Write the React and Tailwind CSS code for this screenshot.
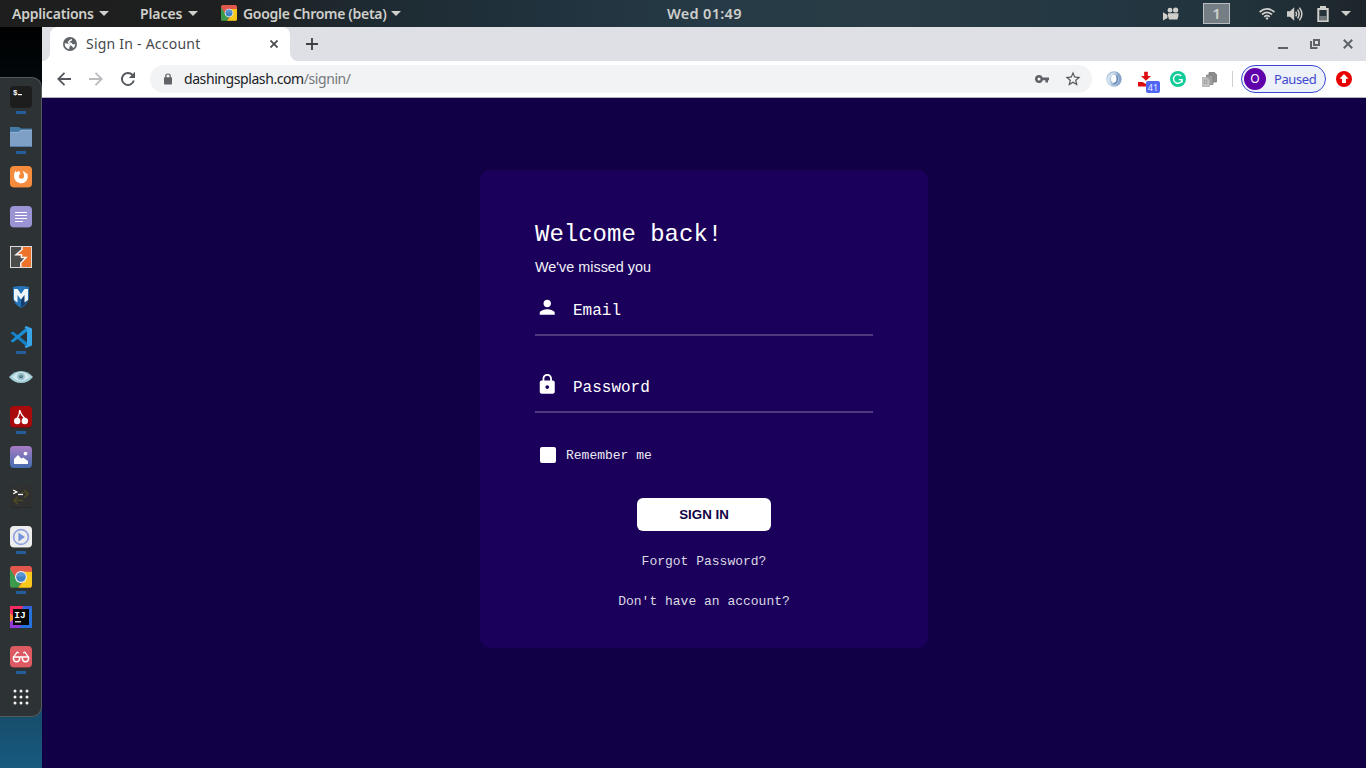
import React from "react";

const Caret = ({ className = "" }) => (
  <svg className={"shrink-0 " + className} width="10" height="5" viewBox="0 0 10 5">
    <path d="M0 0H10L5 5Z" fill="currentColor" />
  </svg>
);

const ChromeLogo = ({ size }) => (
  <svg className="shrink-0" width={size} height={size} viewBox="0 0 22 22">
    <clipPath id="chromeClip">
      <rect width="22" height="22" rx="3.5" />
    </clipPath>
    <g clipPath="url(#chromeClip)">
      <rect width="22" height="22" fill="#e2574b" />
      <path d="M0 2L7 14L11 16.5L8 22H0Z" fill="#3c9a4c" />
      <path d="M11 5.5H22V22H8L15.5 13Z" fill="#f8c81c" />
      <path d="M0 0H22V5.5H11L6 12L0 2.5Z" fill="#e2574b" />
      <circle cx="11" cy="11" r="6" fill="#f2f2f2" />
      <circle cx="11" cy="11" r="4.8" fill="#3f7fc4" />
      <path d="M6.3 10.5a4.8 4.8 0 0 1 9.4 0Z" fill="#5b96d2" />
    </g>
    <rect y="21" x="2" width="18" height="1" fill="#000" opacity=".2" />
  </svg>
);

function TopBar() {
  return (
    <header className="flex h-[27px] shrink-0 items-center bg-[linear-gradient(90deg,#1e1e1e_0%,#1e1f20_16%,#1e2a31_27%,#20323d_40%,#263b47_53%,#293c45_66%,#233742_80%,#22333c_91%,#1d252a_100%)] pl-3 font-['Noto_Sans',sans-serif] text-[14px] font-semibold text-[#cfcfcb]">
      <span className="w-[82px] whitespace-nowrap tracking-[-0.2px]">Applications</span>
      <Caret className="ml-[5px]" />
      <span className="ml-[31px] w-[43px] whitespace-nowrap tracking-[-0.1px]">Places</span>
      <Caret className="ml-[5px]" />
      <span className="ml-[23px] w-[22px] pb-px"><ChromeLogo size={16} /></span>
      <span className="w-[143px] whitespace-nowrap tracking-[-0.3px]">Google Chrome (beta)</span>
      <Caret className="ml-[5px]" />
      <span className="ml-[266px] w-[75px] text-[14.5px] whitespace-nowrap tracking-[0.3px]">Wed 01:49</span>
      <svg className="ml-[421px]" width="16" height="14" viewBox="0 0 16 14" fill="currentColor">
        <circle cx="7" cy="3.2" r="2.4" /><circle cx="12.6" cy="3" r="2.6" />
        <path d="M5 6.2H15.4V9L14.4 12.5H6L5 9Z" />
        <path d="M0 5.2L4.5 8V11L0 13.4Z" />
      </svg>
      <span className="ml-6 flex h-[21px] w-[27px] items-center justify-center border border-[#b9bdbf] bg-[#747e84] text-[15px] font-semibold">1</span>
      <svg className="ml-[29px]" width="16" height="14" viewBox="0 0 16 14" fill="none" stroke="currentColor" strokeWidth="1.7">
        <path d="M.6 5Q8-1.4 15.4 5M3 7.5Q8 3.2 13 7.5M5.2 9.8Q8 7.4 10.8 9.8" />
        <circle cx="8" cy="11.4" r="1.2" fill="currentColor" stroke="none" />
      </svg>
      <svg className="ml-3" width="16" height="16" viewBox="0 0 16 16" fill="none" stroke="currentColor" strokeWidth="1.5">
        <path d="M0 5.3H3L7.2 1.3V14.7L3 10.7H0Z" fill="currentColor" stroke="none" />
        <path d="M8.7 5.6Q10.4 8 8.7 10.4M10.6 3.6Q13.6 8 10.6 12.4M12.4 1.6Q17.3 8 12.4 14.4" />
      </svg>
      <svg className="ml-[14px]" width="12" height="16" viewBox="0 0 12 16">
        <path d="M3 0H9V2H11.700V16H.3V2H3Z" fill="currentColor" />
        <rect x="2.3" y="4" width="7.4" height="10.2" fill="#26333a" />
        <rect x="2.3" y="10" width="7.4" height="4.2" fill="#6d767a" />
      </svg>
      <Caret className="ml-3" />
    </header>
  );
}

const Tile = ({ fill, children, r = 4 }) => (
  <svg width="22" height="22" viewBox="0 0 22 22">
    <rect width="22" height="22" rx={r} fill="#000" opacity=".35" />
    <rect width="22" height="21.4" rx={r} fill={fill} />
    {children}
  </svg>
);

const dockItems = [
  { on: true, icon: (
    <Tile fill="#1d1d1d">
      <text x="3" y="8.6" fontSize="7.5" fontWeight="bold" fontFamily="Liberation Mono, monospace" fill="#fff">$</text>
      <rect x="8" y="8" width="4" height="1.2" fill="#fff" />
    </Tile>) },
  { on: true, icon: (
    <svg width="22" height="22" viewBox="0 0 22 22">
      <path d="M0 1H9L11 2.5H22V8H0Z" fill="#4379a5" />
      <path d="M0 6H8.5L11 4H22V21H0Z" fill="#7e9fc6" />
      <path d="M0 6.3H8.6L11.1 4.3H22" stroke="#a1bbd8" strokeWidth=".7" fill="none" />
      <rect y="20" width="22" height="1" fill="#557ca6" />
    </svg>) },
  { icon: (
    <Tile fill="#f58b3d">
      <path d="M5.200 4.800L6.500 6.300Q8 5 9.800 5.400Q9.200 6.800 10.600 7.600L9 9.200Q8.200 12.600 11.200 12.800Q14.600 12.600 14 9Q14 7.200 12.400 5Q15.200 5.600 16.300 7.800L17 6.800Q18.900 11.500 16.300 14.900Q13.600 18 10 17.200Q4.500 16 4 10.800Q4 7.500 5.200 4.800Z" fill="#fff" />
    </Tile>) },
  { icon: (
    <Tile fill="#9b94d4">
      <path d="M5 6.5H17M5 9.5H17M5 12.5H17M5 15.5H13" stroke="#fff" strokeWidth="1.1" />
    </Tile>) },
  { icon: (
    <svg width="22" height="22" viewBox="0 0 22 22">
      <rect width="22" height="22" fill="#dadada" />
      <rect x="1" y="1" width="20" height="20" fill="#4c4c4c" />
      <path d="M12 1H21V21H10.800V17.500L15.500 11.500H10.500V9.500L6 9L12 3.500Z" fill="#ee722a" />
      <path d="M12 1V3.500L6 8.800H11.500V11.500H16L10.800 17V21" fill="none" stroke="#f4f4f4" strokeWidth="1.500" />
    </svg>) },
  { icon: (
    <svg width="22" height="22" viewBox="0 0 22 22">
      <path d="M3 1Q11-1 19 1V12Q18 18 11 22Q4 18 3 12Z" fill="#2574ba" />
      <path d="M11 13L17 5V16Q14 20 11 21.5Z" fill="#153e70" />
      <path d="M4 3H7.5L11 8L14.5 3H18V14L14.5 16.5V9L11 13.5L7.5 9V16.5L4 14Z" fill="#eef5fb" />
    </svg>) },
  { on: true, icon: (
    <svg width="22" height="22" viewBox="0 0 22 22">
      <path d="M.5 7L3 5.6L17 16.5V21Z" fill="#1680c7" />
      <path d="M.5 15L3 16.4L17 5.5V1Z" fill="#1b8ed6" />
      <path d="M16 0L22 2.5V19.5L16 22L14.5 20.5L17 19V3L14.5 1.5Z" fill="#36a5ea" />
    </svg>) },
  { icon: (
    <svg width="24" height="14" viewBox="0 0 24 14">
      <path d="M0 7Q5 1 12 1Q19 1 24 7Q19 13 12 13Q5 13 0 7Z" fill="#a3ced8" />
      <path d="M3 7Q8 2 12 2Q17 2 21 7Q16 11 12 11Q7 11 3 7Z" fill="#d0e8ed" />
      <circle cx="12" cy="6.5" r="3.800" fill="#98c1cb" />
      <circle cx="12" cy="6.5" r="1.8" fill="#3b6774" />
      <circle cx="12" cy="6" r=".7" fill="#d5e9ed" />
    </svg>) },
  { on: true, icon: (
    <Tile fill="#a90b0d">
      <circle cx="7.2" cy="15" r="3.2" fill="#fff" /><circle cx="14.8" cy="15" r="3.2" fill="#fff" />
      <path d="M9.6 4Q10 8 7 12.5M9.8 4.5Q11 9 14.8 12.5" stroke="#fff" strokeWidth="1.2" fill="none" />
    </Tile>) },
  { icon: (
    <svg width="22" height="22" viewBox="0 0 22 22">
      <linearGradient id="photoSky" x1="0" y1="0" x2="0" y2="1"><stop stopColor="#a87cc4" /><stop offset="1" stopColor="#436cae" /></linearGradient>
      <rect width="22" height="22" rx="4" fill="url(#photoSky)" />
      <path d="M4 18V13L8 9L11.5 12.8L13 11.4L18 15V18Z" fill="#fff" /><circle cx="15.5" cy="7.6" r="1.9" fill="#fff" />
    </svg>) },
  { icon: (
    <Tile fill="#303030">
      <path d="M3.2 4L6.8 5.9L3.2 7.8" stroke="#fff" strokeWidth="1.3" fill="none" />
      <rect x="8" y="7.8" width="5" height="1.3" fill="#fff" />
      <path d="M11.500 6.800H14.500M14 4L18 7.800L14 11.600M13 14.500H5M8 10.700L4 14.500L8 18.300" fill="none" stroke="#4d4923" strokeWidth="1.600" />
    </Tile>) },
  { on: true, icon: (
    <Tile fill="#ededed">
      <circle cx="11" cy="11" r="7.4" fill="none" stroke="#91a2e0" strokeWidth="1.7" />
      <path d="M8.4 6.6L15 11L8.4 15.4Z" fill="#7694dd" />
    </Tile>) },
  { on: true, icon: <ChromeLogo size={22} /> },
  { icon: (
    <svg width="22" height="22" viewBox="0 0 22 22">
      <rect width="22" height="22" fill="#2673e0" />
      <path d="M0 0H14L4 14L0 8Z" fill="#f52b61" /><path d="M0 7L5 12L3 19L0 17Z" fill="#f48a2b" />
      <path d="M0 16L4 13V18L12 19L9 22H0Z" fill="#9138d8" /><path d="M12 0L17 4L22 2V0Z" fill="#365ddb" />
      <rect x="3" y="3" width="16" height="16" fill="#080808" />
      <text x="4.2" y="12" fontSize="9.500" fontWeight="bold" fontFamily="Liberation Mono, monospace" fill="#fff">IJ</text>
      <rect x="5" y="15.2" width="6" height="1.2" fill="#fff" />
    </svg>) },
  { on: true, icon: (
    <Tile fill="#de5a62">
      <path d="M3.700 11L7 6.300Q8 5.800 8.600 7.200M18.300 11L15 6.300Q14 5.800 13.400 7.200" fill="none" stroke="#fff" strokeWidth="1.3" />
      <path d="M3.600 11H9.400L9.700 12.500Q9.300 15.800 6.500 15.800Q3.700 15.800 3.400 12.500ZM18.400 11H12.600L12.300 12.500Q12.700 15.800 15.500 15.800Q18.300 15.800 18.600 12.500ZM9.400 11H12.600" fill="none" stroke="#fff" strokeWidth="1.5" />
    </Tile>) },
  { icon: (
    <svg width="16" height="16" viewBox="0 0 16 16" fill="#f3f3f3">
      {[2, 8, 14].map((y) => [2, 8, 14].map((x) => <circle key={x + "-" + y} cx={x} cy={y} r="1.5" />))}
    </svg>) },
];

function Dock() {
  return (
    <aside className="w-[42px] shrink-0 bg-[linear-gradient(180deg,#000_0%,#02080c_7%,#123c56_70%,#164d6b_93%,#185a80_100%)] pt-[50px]">
      <div className="h-[640px] rounded-r-[10px] border border-l-0 border-[#555a5b] bg-[#2d3335] pl-px">
        {dockItems.map((item, i) => (
          <div key={i} className="flex h-10 flex-col items-center">
            <div className="flex h-[38px] shrink-0 items-center justify-center">{item.icon}</div>
            {item.on && <i className="-mt-[5px] h-[3px] w-[10px] shrink-0 bg-[#245d9c]" />}
          </div>
        ))}
      </div>
    </aside>
  );
}

function TabStrip() {
  return (
    <div className="flex h-[34px] shrink-0 items-stretch bg-[#dee0e5]">
      <div className="w-2 bg-white"><div className="h-full rounded-br-[8px] bg-[#dee0e5]" /></div>
      <div className="flex w-60 items-center rounded-t-[8px] bg-white pl-[13px] font-['Noto_Sans',sans-serif] text-[14px] text-[#45494d]">
        <svg width="14" height="14" viewBox="0 0 14 14">
          <circle cx="7" cy="7" r="7" fill="#5f6368" />
          <path d="M1.6 6.2L5.6 6.8L7.6 8.6L6.4 10L6.2 12.3Q1.8 11.2 1.6 6.2ZM9 2V3.6L7.2 4.2L6.4 5.6H8.2L9.6 7.2H12.3Q12.2 9.6 10.4 11.2L9.2 9.4L7.4 8L5.4 6.2L4.6 5L7.2 2.4Z" fill="#fff" />
        </svg>
        <span className="ml-[9px] w-[114px] pb-[2px] whitespace-nowrap tracking-[0.23px]">Sign In - Account</span>
        <svg className="ml-[70px]" width="8" height="8" viewBox="0 0 8 8"><path d="M.5 .5L7.5 7.5M7.5 .5L.5 7.5" stroke="#45494d" strokeWidth="1.7" /></svg>
      </div>
      <div className="w-2 bg-white"><div className="h-full rounded-bl-[8px] bg-[#dee0e5]" /></div>
      <div className="flex flex-1 items-center pl-2 text-[#5f6368]">
        <svg width="12" height="12" viewBox="0 0 12 12"><path d="M6 0V12M0 6H12" stroke="#3c4043" strokeWidth="1.8" /></svg>
        <svg className="mt-2 ml-auto" width="10" height="2"><rect width="10" height="2" fill="currentColor" /></svg>
        <svg className="ml-[22px]" width="10" height="10" viewBox="0 0 10 10" fill="none" stroke="currentColor" strokeWidth="2"><path d="M4 1H9V6H4Z" /><path d="M1 2V9H7.500" /></svg>
        <svg className="mr-[13px] ml-[23px]" width="10" height="10" viewBox="0 0 10 10"><path d="M.8 .8L9.200 9.200M9.200 .8L.8 9.200" stroke="currentColor" strokeWidth="2" /></svg>
      </div>
    </div>
  );
}

function Toolbar() {
  return (
    <div className="flex h-[37px] shrink-0 items-center border-b border-[#b2b3b6] bg-white pl-[15px] font-['Noto_Sans',sans-serif] text-[#5f6368]">
      <svg width="14" height="14" viewBox="0 0 14 14" fill="none" stroke="#54585d" strokeWidth="1.8"><path d="M14 7H1.5M7.5 .8L1.3 7L7.5 13.2" /></svg>
      <svg className="ml-[18px]" width="14" height="14" viewBox="0 0 14 14" fill="none" stroke="#b9bbbe" strokeWidth="1.8"><path d="M0 7H12.5M6.5 .8L12.7 7L6.5 13.2" /></svg>
      <svg className="ml-[17px]" width="16" height="16" viewBox="0 0 16 16"><path d="M13.8 9.4A6 6 0 1 1 12.4 3.9" fill="none" stroke="#54585d" strokeWidth="1.9" /><path d="M15 .8V7H8.8Z" fill="#54585d" /></svg>
      <div className="ml-[14px] flex h-7 w-[942px] items-center rounded-full bg-[#f1f3f4] pl-[14px]">
        <svg width="8" height="12" viewBox="0 0 8 12"><rect y="4.2" width="8" height="7.3" rx=".8" fill="#5f6368" /><path d="M1.8 5V3Q1.8 1 4 1Q6.2 1 6.2 3V5" fill="none" stroke="#5f6368" strokeWidth="1.2" /></svg>
        <span className="ml-3 w-[168px] pb-px text-[14px] whitespace-nowrap tracking-[-0.42px] text-[#202124]">dashingsplash.com<span className="text-[#74787c]">/signin/</span></span>
        <svg className="mb-px ml-[683px]" width="14" height="8" viewBox="0 0 14 8"><path fillRule="evenodd" d="M4 0A4 4 0 0 1 7.700 2.400H14V5.200H13V7.500H10.400V5.200H7.800A4 4 0 1 1 4 0ZM4 2.500A1.500 1.500 0 1 0 4 5.500A1.500 1.500 0 1 0 4 2.500Z" fill="#5f6368" /></svg>
        <svg className="ml-[15px]" width="18" height="18" viewBox="0 0 24 24"><path d="M22 9.24l-7.19-.62L12 2 9.19 8.63 2 9.24l5.46 4.73L5.82 21 12 17.27 18.18 21l-1.63-7.03L22 9.24zM12 15.4l-3.76 2.27 1-4.28-3.32-2.88 4.38-.38L12 6.1l1.71 4.04 4.38.38-3.32 2.88 1 4.28L12 15.4z" fill="#54585d" /></svg>
      </div>
      <svg className="ml-[14px]" width="16" height="16" viewBox="0 0 16 16">
        <circle cx="8" cy="8" r="7.7" fill="#a9c0dc" />
        <path d="M9 .4A7.700 7.700 0 0 1 9 15.600Q13.500 12 13 7.500Q12.500 3 9 .4Z" fill="#86a3c8" />
        <path d="M2 5Q5 0 11 2Q6 2.500 4.200 7Q3.500 12 6.500 15Q0 13 1 7Z" fill="#d3e1ef" />
        <path d="M11 4Q13.500 8 10 13L6 13.500Q11 11 10 5Z" fill="#5f82b2" />
        <ellipse cx="7.800" cy="7.700" rx="2.700" ry="4" fill="#fff" />
      </svg>
      <div className="relative ml-4 h-4 w-[22px]">
        <svg width="15" height="16" viewBox="0 0 15 16" fill="#dc0b12"><path d="M6.200 .8H9.800V5H13L8 9.800L3 5H6.200ZM0 11H4.500L8 13L11.500 11H15V15.500H0Z" /></svg>
        <span className="absolute top-[10px] left-2 flex h-3 w-[14px] items-center justify-center rounded-[2px] bg-[#4f66f2] text-[9px] leading-none text-[#e6eafd]">41</span>
      </div>
      <svg className="ml-[10px]" width="16" height="16" viewBox="0 0 16 16"><circle cx="8" cy="8" r="8" fill="#11cb98" /><path d="M11.3 5A4.4 4.4 0 1 0 12.2 9M8.8 8.6H12.1V11.6" fill="none" stroke="#fff" strokeWidth="1.4" /></svg>
      <svg className="ml-4" width="16" height="15" viewBox="0 0 16 15" strokeWidth=".8">
        <path d="M7 .5H12.500L14.500 2.500V10H7Z" fill="#8d8d8d" stroke="#7a7a7a" />
        <path d="M4.500 3H9.500L11 4.500V12.500H4.500Z" fill="#9d9d9d" stroke="#7f7f7f" />
        <path d="M.5 5.500H5L7.500 8V14.500H.5Z" fill="#c0c0c0" stroke="#adadad" />
        <path d="M2.500 8H4.700V11.500H2.500Z" fill="none" stroke="#999" />
      </svg>
      <i className="ml-[14px] h-4 w-px bg-[#cfd0d2]" />
      <div className="ml-2 flex h-7 w-[85px] items-center rounded-full border border-[#3a46d1] bg-[#ecf1fa] pl-[2px] text-[13px] text-[#3f48cc]">
        <span className="flex h-[22px] w-[22px] items-center justify-center rounded-full bg-[#5f02ab] text-[12px] text-white">O</span>
        <span className="ml-2 pt-[2px] whitespace-nowrap tracking-[-0.4px]">Paused</span>
      </div>
      <svg className="ml-[10px]" width="16" height="16" viewBox="0 0 16 16"><circle cx="8" cy="8" r="8" fill="#e80000" /><path d="M8 3L12.500 7.800H10V12H6V7.800H3.500Z" fill="#fff" /></svg>
    </div>
  );
}

const Field = ({ icon, label }) => (
  <label className="flex h-[46px] border-b-2 border-[#50397f]">
    <svg className="mt-[5.5px] ml-px" width="22.5" height="22.5" viewBox="0 0 24 24" fill="#fff">{icon}</svg>
    <span className="mt-3 ml-[14.5px] text-[16px] leading-[18px] text-white">{label}</span>
  </label>
);

function SignIn() {
  return (
    <main className="flex flex-1 items-start justify-center bg-[#110045] pt-[72px] font-['Liberation_Mono',monospace]">
      <form className="flex h-[478px] w-[448px] flex-col rounded-[10px] bg-[#1a005b] px-[55px] pt-[51px]">
        <h1 className="text-[24px] leading-7 text-white">Welcome back!</h1>
        <p className="mt-[9px] font-['Liberation_Sans',sans-serif] text-[14.4px] leading-[18px] text-[#f3f1f7]">We&#39;ve missed you</p>
        <div className="mt-[14px]">
          <Field label="Email" icon={<path d="M12 12c2.21 0 4-1.79 4-4s-1.79-4-4-4-4 1.79-4 4 1.790 4 4 4zm0 2c-2.67 0-8 1.34-8 4v2h16v-2c0-2.66-5.330-4-8-4z" />} />
        </div>
        <div className="mt-[31px]">
          <Field label="Password" icon={<path d="M18 8h-1V6c0-2.760-2.240-5-5-5S7 3.240 7 6v2H6c-1.100 0-2 .9-2 2v10c0 1.100.9 2 2 2h12c1.100 0 2-.9 2-2V10c0-1.100-.9-2-2-2zm-6 9c-1.100 0-2-.9-2-2s.9-2 2-2 2 .9 2 2-.9 2-2 2zm3.100-9H8.900V6c0-1.710 1.390-3.100 3.100-3.100 1.710 0 3.100 1.390 3.100 3.100v2z" />} />
        </div>
        <div className="mt-[34px] ml-[5px] flex h-4 items-center">
          <span className="h-4 w-4 rounded-[2px] bg-white" />
          <span className="ml-[10px] pt-[2px] text-[13px] text-[#ece9f2]">Remember me</span>
        </div>
        <button type="button" className="mt-[35px] h-[33px] w-[134px] self-center rounded-[6px] bg-white font-['Liberation_Sans',sans-serif] text-[13.333px] font-bold text-[#110045]">SIGN IN</button>
        <a className="mt-[23px] self-center text-[13px] leading-4 text-[#dcd9e2]">Forgot Password?</a>
        <a className="mt-6 self-center text-[13px] leading-4 text-[#dcd9e2]">Don&#39;t have an account?</a>
      </form>
    </main>
  );
}

export default function App() {
  return (
    <div className="flex h-[768px] w-[1366px] flex-col overflow-hidden">
      <TopBar />
      <div className="flex min-h-0 flex-1">
        <Dock />
        <div className="flex min-w-0 flex-1 flex-col">
          <TabStrip />
          <Toolbar />
          <SignIn />
        </div>
      </div>
    </div>
  );
}
